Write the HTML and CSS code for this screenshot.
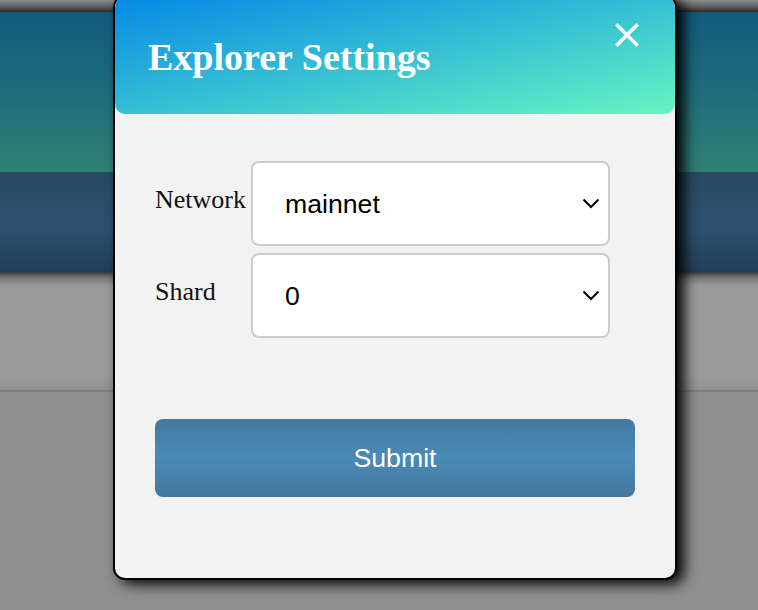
FILE: index.html
```html
<!DOCTYPE html>
<html lang="en">
<head>
<meta charset="utf-8">
<title>Explorer Settings</title>
<link rel="stylesheet" href="styles.css">
</head>
<body>
  <div class="page">
    <div class="top-strip"></div>
    <header class="hero"></header>
    <nav class="navband"></nav>
    <div class="shade"></div>
    <section class="content"></section>
    <div class="rule"></div>
    <section class="lower"></section>
  </div>

  <div class="modal" role="dialog" aria-labelledby="modal-title">
    <div class="modal-header">
      <h2 class="modal-title" id="modal-title">Explorer Settings</h2>
      <button class="close" type="button" aria-label="Close">
        <svg width="24" height="24" viewBox="0 0 24 24"><path d="M1.3 1.3 L22.7 22.7 M22.7 1.3 L1.3 22.7" stroke="#fff" stroke-width="3.4" fill="none"/></svg>
      </button>
    </div>
    <div class="modal-body">
      <form class="settings">
        <div class="fields">
          <label class="field-label" for="network">Network</label>
          <div class="select-wrap">
            <select id="network" class="select"><option>mainnet</option><option>testnet</option></select>
            <svg class="chev" width="18" height="11" viewBox="0 0 18 11"><polyline points="1.5,1.5 9,9 16.5,1.5" stroke="#000" stroke-width="2" fill="none"/></svg>
          </div>
          <label class="field-label" for="shard">Shard</label>
          <div class="select-wrap">
            <select id="shard" class="select"><option>0</option><option>1</option><option>2</option><option>3</option></select>
            <svg class="chev" width="18" height="11" viewBox="0 0 18 11"><polyline points="1.5,1.5 9,9 16.5,1.5" stroke="#000" stroke-width="2" fill="none"/></svg>
          </div>
        </div>
        <button class="submit" type="button">Submit</button>
      </form>
    </div>
  </div>
</body>
</html>
```

FILE: styles.css
```css
html, body {
  margin: 0;
  padding: 0;
  height: 100%;
  overflow: hidden;
}
body {
  background: #8f8f8f;
  font-family: "Liberation Serif", "Times New Roman", serif;
}
.page {
  display: flex;
  flex-direction: column;
  height: 610px;
}
.top-strip {
  height: 12px;
  background: linear-gradient(#8e8e8e, #5a5a5a 60%, #2a2a2a);
}
.hero {
  height: 160px;
  background: linear-gradient(#115b7d, #1d6d7b 50%, #2f8073);
}
.navband {
  height: 100px;
  background: linear-gradient(#294962, #2c5170 55%, #233d56);
}
.shade {
  height: 18px;
  background: linear-gradient(#3a3a3a, #7a7a7a 35%, #979797 75%, #9b9b9b);
}
.content {
  height: 100px;
  background: linear-gradient(#9b9b9b, #9a9a9a 85%, #929292);
}
.rule {
  height: 2px;
  background: #7e7e7e;
}
.lower {
  flex: 1;
  background: #8f8f8f;
}

.modal {
  position: absolute;
  left: 115px;
  top: -3px;
  width: 560px;
  height: 581px;
  display: flex;
  flex-direction: column;
  background: #f2f2f2;
  border-radius: 10px;
  box-shadow: 0 0 0 2px #000, 7px 4px 14px 2px #000;
}
.modal-header {
  position: relative;
  height: 117px;
  box-sizing: border-box;
  padding: 41px 33px 0;
  border-radius: 10px;
  background: linear-gradient(to bottom right, #0588e6, #67f5c2);
}
.modal-title {
  margin: 0;
  font-family: "Liberation Serif", "Times New Roman", serif;
  font-weight: bold;
  font-size: 38px;
  line-height: 38px;
  color: #fff;
}
.close {
  position: absolute;
  top: 26px;
  right: 36px;
  width: 24px;
  height: 24px;
  padding: 0;
  border: none;
  background: transparent;
  display: block;
}
.close svg {
  display: block;
}
.modal-body {
  flex: 1;
  padding: 47px 40px 0;
}
.settings {
  display: flex;
  flex-direction: column;
}
.fields {
  display: grid;
  grid-template-columns: 96px 359px;
  row-gap: 7px;
}
.field-label {
  padding-top: 24px;
  font-family: "Liberation Serif", "Times New Roman", serif;
  font-size: 26px;
  line-height: 30px;
  color: #111;
}
.select-wrap {
  position: relative;
}
.select {
  appearance: none;
  -webkit-appearance: none;
  display: block;
  width: 359px;
  height: 85px;
  box-sizing: border-box;
  margin: 0;
  padding: 0 40px 0 32px;
  border: 2px solid #cccccc;
  border-radius: 8px;
  background: #fff;
  font-family: "Liberation Sans", Arial, sans-serif;
  font-size: 26.67px;
  color: #000;
  outline: none;
}
.chev {
  position: absolute;
  right: 10px;
  top: 37px;
  pointer-events: none;
}
.submit {
  margin-top: 81px;
  width: 480px;
  height: 78px;
  border: none;
  border-radius: 8px;
  background: linear-gradient(#44789e, #4a8ab6 50%, #44779d);
  color: #fff;
  font-family: "Liberation Sans", Arial, sans-serif;
  font-size: 26.67px;
  padding: 0;
}
```
